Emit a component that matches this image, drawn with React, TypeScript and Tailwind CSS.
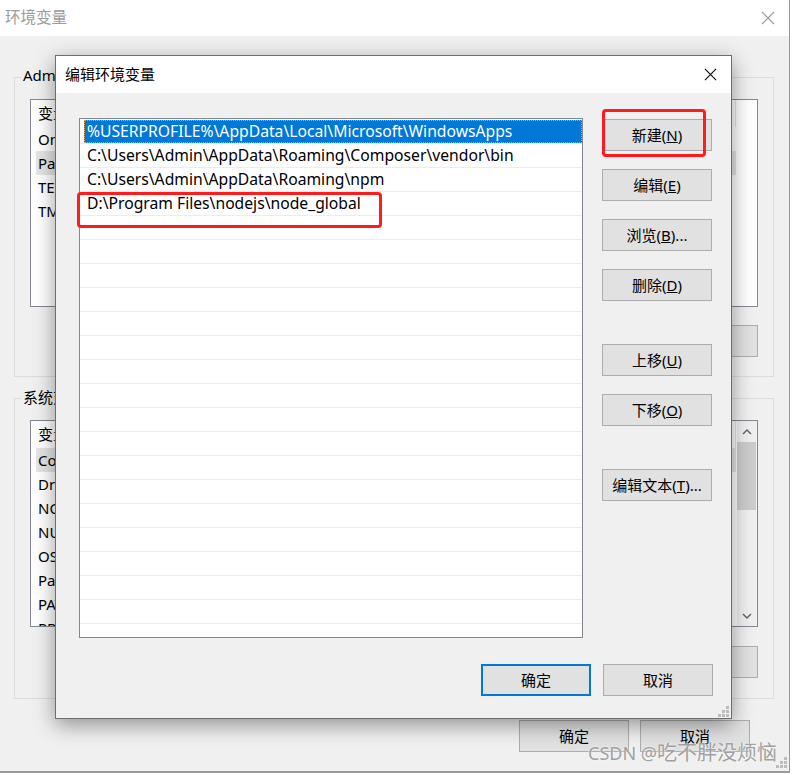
import React from "react";

const userVars = [
  ["OneDrive", "C:\\Users\\Admin\\OneDrive"],
  ["Path", "%USERPROFILE%\\AppData\\Local\\Microsoft\\WindowsApps;"],
  ["TEMP", "%USERPROFILE%\\AppData\\Local\\Temp"],
  ["TMP", "%USERPROFILE%\\AppData\\Local\\Temp"],
];

const sysVars = [
  ["ComSpec", "C:\\Windows\\system32\\cmd.exe"],
  ["DriverData", "C:\\Windows\\System32\\Drivers\\DriverData"],
  ["NODE_PATH", "D:\\Program Files\\nodejs\\node_global\\node_modules"],
  ["NUMBER_OF_PROCESSORS", "8"],
  ["OS", "Windows_NT"],
  ["Path", "C:\\Windows\\system32;C:\\Windows;D:\\Program Files\\nodejs\\"],
  ["PATHEXT", ".COM;.EXE;.BAT;.CMD;.VBS;.VBE;.JS;.JSE;.WSF"],
  ["PROCESSOR_ARCHITECTURE", "AMD64"],
];

const paths = [
  "%USERPROFILE%\\AppData\\Local\\Microsoft\\WindowsApps",
  "C:\\Users\\Admin\\AppData\\Roaming\\Composer\\vendor\\bin",
  "C:\\Users\\Admin\\AppData\\Roaming\\npm",
  "D:\\Program Files\\nodejs\\node_global",
];

function CloseIcon({ className }: { className?: string }) {
  return (
    <svg viewBox="0 0 14 14" className={className} fill="none" stroke="currentColor" strokeWidth="1.1">
      <path d="M1 1L13 13M13 1L1 13" />
    </svg>
  );
}

function Grip() {
  return (
    <svg width="11" height="11" viewBox="0 0 11 11" fill="#bcbcbc">
      <rect x="8" y="0" width="3" height="3" />
      <rect x="4" y="4" width="3" height="3" />
      <rect x="8" y="4" width="3" height="3" />
      <rect x="0" y="8" width="3" height="3" />
      <rect x="4" y="8" width="3" height="3" />
      <rect x="8" y="8" width="3" height="3" />
    </svg>
  );
}

function Chevron({ up }: { up?: boolean }) {
  return (
    <svg width="10" height="6" viewBox="0 0 10 6" fill="none" stroke="#606060" strokeWidth="1.4">
      <path d={up ? "M1 5L5 1L9 5" : "M1 1L5 5L9 1"} />
    </svg>
  );
}

function WinButton({ children, primary = false }: { children: React.ReactNode; primary?: boolean }) {
  return (
    <div
      className={`flex h-[32px] w-[110px] shrink-0 items-center justify-center bg-[#e1e1e1] text-[15px] text-black ${
        primary ? "border-2 border-[#0078d7]" : "border border-[#adadad]"
      }`}
    >
      {children}
    </div>
  );
}

function VarList({ rows, selected, scroll }: { rows: string[][]; selected: number; scroll?: boolean }) {
  return (
    <div className="flex h-full border border-[#828790] bg-white text-[15px] text-black">
      <div className="min-w-0 flex-1 overflow-hidden pl-[5px]">
        <div className="flex h-[27px] w-[700px] items-center">
          <div className="w-[190px] pl-[2px]">变量</div>
          <div className="flex-1 self-stretch border-r border-[#e5e5e5] pl-[2px] leading-[27px]">值</div>
        </div>
        {rows.map((r, i) => (
          <div
            key={r[0]}
            className={`flex h-[24px] w-[700px] items-center whitespace-nowrap ${i === selected ? "bg-[#e5e5e5]" : ""}`}
          >
            <div className="w-[190px] overflow-hidden pl-[2px]">{r[0]}</div>
            <div className="flex-1 overflow-hidden pl-[2px]">{r[1]}</div>
          </div>
        ))}
      </div>
      {scroll && (
        <div className="flex w-[20px] flex-col bg-[#f0f0f0]">
          <div className="flex h-[21px] items-center justify-center">
            <Chevron up />
          </div>
          <div className="h-[68px] w-[19px] bg-[#cdcdcd]" />
          <div className="flex-1" />
          <div className="flex h-[21px] items-center justify-center">
            <Chevron />
          </div>
        </div>
      )}
    </div>
  );
}

export default function App() {
  return (
    <div className="relative h-[775px] w-[792px] overflow-hidden bg-white font-['Noto_Sans','Noto_Sans_CJK_SC',sans-serif]">
      {/* background window: 环境变量 */}
      <div className="flex h-[773px] w-[790px] flex-col border-r border-b-2 border-[#9a9a9a] bg-[#f0f0f0]">
        <div className="flex h-[36px] shrink-0 items-center justify-between bg-white pl-[5px] pr-[14px]">
          <span className="text-[15.5px] text-[#9a9a9a]">环境变量</span>
          <CloseIcon className="h-[14px] w-[14px] text-[#9a9a9a]" />
        </div>

        <div className="pl-[14px] pr-[15px] pt-[31px]">
          <fieldset className="border border-[#dcdcdc] pb-[19px]">
            <legend className="ml-[6px] px-[2px] pb-[4px] text-[15px] leading-[16px] text-black">Administrator 的用户变量(U)</legend>
            <div className="px-[15px]">
              <div className="mt-[12px] h-[208px]">
                <VarList rows={userVars} selected={1} />
              </div>
              <div className="mt-[18px] flex justify-end gap-[12px]">
                <WinButton>新建(N)...</WinButton>
                <WinButton>编辑(E)...</WinButton>
                <WinButton>删除(D)</WinButton>
              </div>
            </div>
          </fieldset>

          <fieldset className="mt-[11px] border border-[#dcdcdc] pb-[20px]">
            <legend className="ml-[6px] px-[2px] pb-[2px] text-[15px] leading-[18px] text-black">系统变量(S)</legend>
            <div className="px-[15px]">
              <div className="mt-[12px] h-[207px]">
                <VarList rows={sysVars} selected={0} scroll />
              </div>
              <div className="mt-[19px] flex justify-end gap-[12px]">
                <WinButton>新建(W)...</WinButton>
                <WinButton>编辑(I)...</WinButton>
                <WinButton>删除(L)</WinButton>
              </div>
            </div>
          </fieldset>
        </div>

        <div className="mt-[21px] flex justify-end gap-[11px] pr-[39px]">
          <WinButton>确定</WinButton>
          <WinButton>取消</WinButton>
        </div>
        <div className="mt-auto flex justify-end pb-[3px] pr-[2px]">
          <Grip />
        </div>
      </div>

      {/* foreground dialog: 编辑环境变量 */}
      <div className="absolute left-[55px] top-[55px] flex h-[664px] w-[677px] flex-col border border-[#6e6e6e] bg-[#f0f0f0] shadow-[0_6px_20px_rgba(0,0,0,0.4)]">
        <div className="flex h-[37px] shrink-0 items-center justify-between bg-white pl-[9px] pr-[14px]">
          <span className="text-[15px] text-black">编辑环境变量</span>
          <CloseIcon className="h-[13px] w-[13px] text-black" />
        </div>

        <div className="flex pl-[23px] pt-[25px]">
          <div className="h-[520px] w-[504px] overflow-hidden border border-[#828790] bg-white pt-[1px] text-[15.7px]">
            {Array.from({ length: 22 }).map((_, i) => (
              <div key={i} className="flex h-[24px] border-b border-[#ececec] pl-[4px]">
                {i === 0 ? (
                  <div className="flex flex-1 items-center border border-dotted border-[#e0a050] bg-[#0078d7] pl-[2px] text-white">
                    {paths[0]}
                  </div>
                ) : (
                  <div className="flex flex-1 items-center pl-[3px] text-black">{paths[i] ?? ""}</div>
                )}
              </div>
            ))}
          </div>

          <div className="ml-[19px] flex flex-col pt-[1px]">
            <WinButton>
              新建(<span className="underline">N</span>)
            </WinButton>
            <div className="mt-[18px]">
              <WinButton>
                编辑(<span className="underline">E</span>)
              </WinButton>
            </div>
            <div className="mt-[18px]">
              <WinButton>
                浏览(<span className="underline">B</span>)...
              </WinButton>
            </div>
            <div className="mt-[18px]">
              <WinButton>
                删除(<span className="underline">D</span>)
              </WinButton>
            </div>
            <div className="mt-[43px]">
              <WinButton>
                上移(<span className="underline">U</span>)
              </WinButton>
            </div>
            <div className="mt-[18px]">
              <WinButton>
                下移(<span className="underline">O</span>)
              </WinButton>
            </div>
            <div className="mt-[43px]">
              <WinButton>
                编辑文本(<span className="underline">T</span>)...
              </WinButton>
            </div>
          </div>
        </div>

        <div className="mt-[26px] flex justify-end gap-[12px] pr-[18px]">
          <WinButton primary>确定</WinButton>
          <WinButton>取消</WinButton>
        </div>
        <div className="mt-auto flex justify-end pb-[1px] pr-[2px]">
          <Grip />
        </div>
      </div>

      {/* red annotation boxes */}
      <div className="absolute left-[77px] top-[192px] h-[36px] w-[305px] rounded-[4px] border-[3px] border-[#ff1c1c]" />
      <div className="absolute left-[602px] top-[109px] h-[48px] w-[104px] rounded-[4px] border-[3px] border-[#ff1c1c]" />

      {/* watermark */}
      <div className="absolute bottom-[8px] right-[15px] flex items-baseline text-[#a0a0a0] [text-shadow:0_0_2px_#ffffff]">
        <span className="text-[18px]">CSDN @</span>
        <span className="text-[20px] leading-[24px]">吃不胖没烦恼</span>
      </div>
    </div>
  );
}
